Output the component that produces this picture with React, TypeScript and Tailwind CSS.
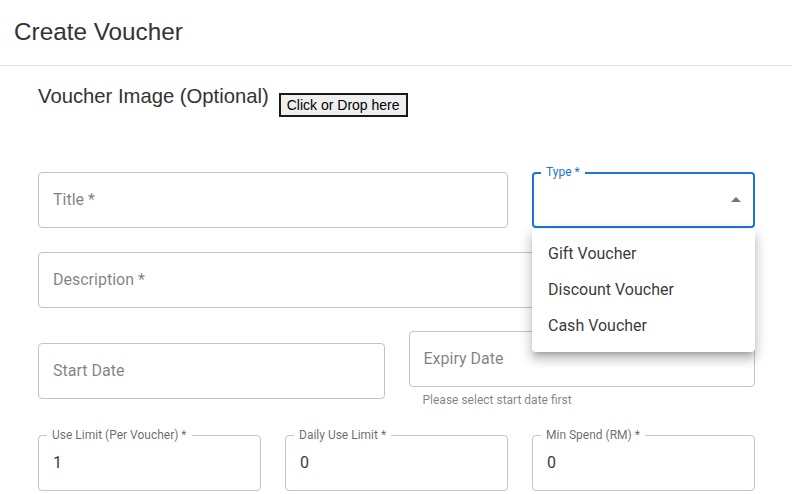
import { ReactNode } from "react";

// Create Voucher form: outlined MUI-style fields with the Type select open.

const ROBOTO = "font-['Roboto',_'Liberation_Sans',_sans-serif]";

type FieldProps = {
  label: string;
  value?: string;
  shrink?: boolean;
  focused?: boolean;
  adornment?: ReactNode;
  children?: ReactNode;
  className?: string;
};

function OutlinedField({ label, value, shrink, focused, adornment, children, className }: FieldProps) {
  const floating = shrink || focused || !!value;
  return (
    <div className={`relative h-[56px] ${className ?? ""}`}>
      <div
        className={`flex h-full items-center rounded-[4px] bg-white ${
          focused ? "border-2 border-[#1976d2] px-[13px]" : "border border-[#c4c4c4] px-[14px]"
        }`}
      >
        {floating ? (
          <span className="text-[16px] text-[rgba(0,0,0,0.8)]">{value}</span>
        ) : (
          <span className="text-[16px] text-[rgba(0,0,0,0.5)]">{label}</span>
        )}
        {adornment}
      </div>
      {floating && (
        <span
          className={`absolute left-[9px] top-[-9px] bg-white px-[5px] text-[12px] leading-[18px] ${
            focused ? "text-[#1976d2]" : "text-[rgba(0,0,0,0.6)]"
          }`}
        >
          {label}
        </span>
      )}
      {children}
    </div>
  );
}

const typeOptions = ["Gift Voucher", "Discount Voucher", "Cash Voucher"];

function TypeMenu() {
  return (
    <ul className="absolute left-0 top-[57px] z-10 w-full rounded-[4px] bg-white pb-[8px] pt-[7px] shadow-[0px_5px_5px_-3px_rgba(0,0,0,0.2),0px_8px_10px_1px_rgba(0,0,0,0.14),0px_3px_14px_2px_rgba(0,0,0,0.12)]">
      {typeOptions.map((opt) => (
        <li key={opt} className="flex h-[36px] items-center px-[16px] text-[16px] text-[rgba(0,0,0,0.8)]">
          {opt}
        </li>
      ))}
    </ul>
  );
}

export default function App() {
  return (
    <div className={`min-h-screen bg-white ${ROBOTO}`}>
      <header className="flex h-[66px] items-center border-b border-[#e3e3e3] px-[14px]">
        <h1 className="font-['Liberation_Sans',_Arial,_sans-serif] text-[24.3px] text-[#333]">Create Voucher</h1>
      </header>

      <div className="px-[38px] pt-[19px]">
        <div className="flex items-start gap-[10px] font-['Liberation_Sans',_Arial,_sans-serif]">
          <span className="text-[20.25px] leading-[23px] text-[#333]">Voucher Image (Optional)</span>
          <button
            type="button"
            className="mt-[8px] h-[24px] border-2 border-[#1a1a1a] bg-[#efefef] px-[6px] text-[14px] leading-none text-black"
          >
            Click or Drop here
          </button>
        </div>

        <div className="mt-[55px] grid w-[717px] grid-cols-3 gap-[24px]">
          <OutlinedField label="Title *" className="col-span-2" />
          <OutlinedField
            label="Type *"
            focused
            adornment={
              <svg viewBox="0 0 24 24" className="ml-auto mr-[-8px] h-[24px] w-[24px] fill-[rgba(0,0,0,0.54)]">
                <path d="M7 14l5-5 5 5z" />
              </svg>
            }
          >
            <TypeMenu />
          </OutlinedField>
          <OutlinedField label="Description *" className="col-span-3" />
        </div>

        <div className="mt-[23px] grid w-[717px] grid-cols-2 items-center gap-[24px]">
          <OutlinedField label="Start Date" />
          <div>
            <OutlinedField label="Expiry Date" />
            <p className="mx-[14px] mt-[3px] text-[12px] leading-[20px] text-[rgba(0,0,0,0.5)]">
              Please select start date first
            </p>
          </div>
        </div>

        <div className="mt-[25px] grid w-[717px] grid-cols-3 gap-[24px]">
          <OutlinedField label="Use Limit (Per Voucher) *" value="1" />
          <OutlinedField label="Daily Use Limit *" value="0" />
          <OutlinedField label="Min Spend (RM) *" value="0" />
        </div>
      </div>
    </div>
  );
}
